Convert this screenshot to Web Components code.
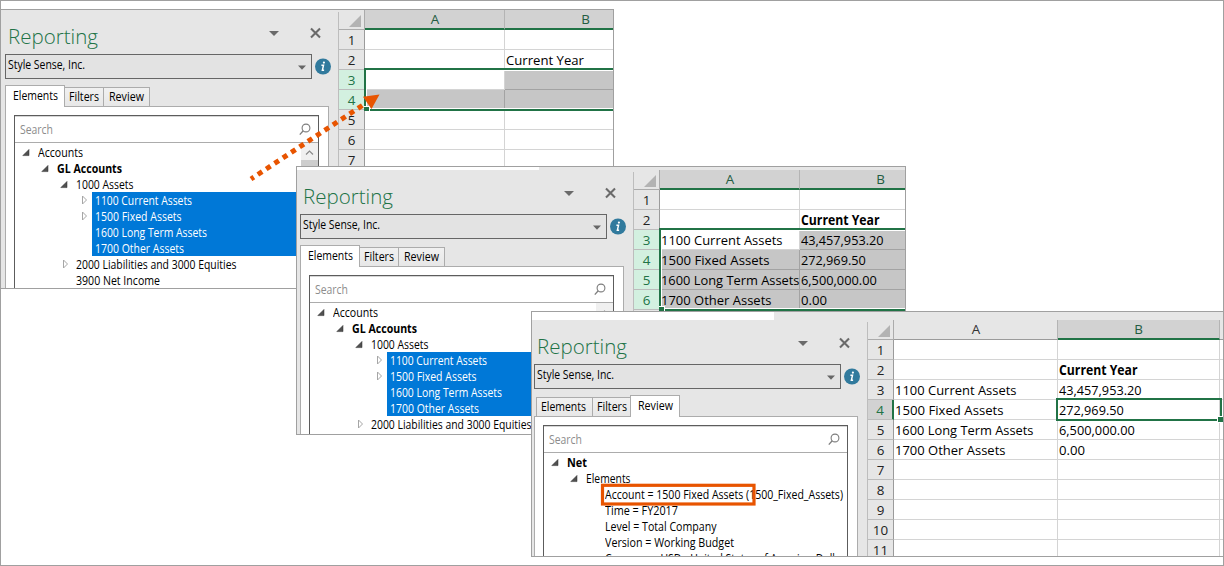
<!DOCTYPE html>
<html lang="en">
<head>
<meta charset="utf-8">
<title>Reporting</title>
<style>
    body {
        margin: 0;
        background: #fff;
    }
</style>
</head>
<body>
<report-canvas>
    <report-window style="left: 0; top: 9px; width: 614px; height: 280px; --shift: 0px; --strip: 0px;">
        <report-pane slot="pane" tab="Elements" tree="accounts" rows="9" scroll></report-pane>
        <sheet-grid slot="sheet" sheet="empty"></sheet-grid>
    </report-window>
    <report-window style="left: 296px; top: 166px; width: 610px; height: 269px; --shift: -1px; --strip: 3px;">
        <report-pane slot="pane" tab="Elements" tree="accounts" rows="8" scroll></report-pane>
        <sheet-grid slot="sheet" sheet="filled"></sheet-grid>
    </report-window>
    <report-window style="left: 531px; top: 311px; width: 693px; height: 246px; --shift: -2px; --strip: 8px;">
        <report-pane slot="pane" tab="Review" tree="review" rows="7"></report-pane>
        <sheet-grid slot="sheet" sheet="review"></sheet-grid>
    </report-window>
    <callout-marks></callout-marks>
</report-canvas>

<script>
// Condense each label to its data-fit width
function fitText(root) {
    root.querySelectorAll('[data-fit]').forEach(el => {
        const natural = el.getBoundingClientRect().width;
        el.style.transform = `scaleX(${(Number(el.dataset.fit) / natural).toFixed(4)})`;
    });
}

// [level, label, width, state]
const TREES = {
    accounts: [
        [0, 'Accounts', 45, 'open'],
        [1, 'GL Accounts', 65, 'open bold'],
        [2, '1000 Assets', 57.5, 'open'],
        [3, '1100 Current Assets', 97, 'closed selected'],
        [3, '1500 Fixed Assets', 86.5, 'closed selected'],
        [3, '1600 Long Term Assets', 112, 'selected'],
        [3, '1700 Other Assets', 89, 'selected'],
        [2, '2000 Liabilities and 3000 Equities', 160.5, 'closed'],
        [2, '3900 Net Income', 84, '']
    ],
    review: [
        [0, 'Net', 20, 'open bold'],
        [1, 'Elements', 44.5, 'open'],
        [2, 'Account = 1500 Fixed Assets (1500_Fixed_Assets)', 238, ''],
        [2, 'Time = FY2017', 73, ''],
        [2, 'Level = Total Company', 111.5, ''],
        [2, 'Version = Working Budget', 129, ''],
        [2, 'Currency = USD - United States of America, Dollar', 240, '']
    ]
};

const ACCOUNT_ROWS = {
    2: ['', ['Current Year', 78.5, 'bold']],
    3: [['1100 Current Assets', 121.5], ['43,457,953.20', 82.5]],
    4: [['1500 Fixed Assets', 108.5], ['272,969.50', 64.8]],
    5: [['1600 Long Term Assets', 138.5], ['6,500,000.00', 75.8]],
    6: [['1700 Other Assets', 110.5], ['0.00', 26]]
};

const SHEETS = {
    empty: {
        columns: [140, 162],
        rows: 7,
        cells: { 2: ['', ['Current Year', 78]] },
        activeCols: [0, 1],
        range: [3, 4]
    },
    filled: {
        columns: [140, 162],
        rows: 7,
        cells: ACCOUNT_ROWS,
        activeCols: [0, 1],
        range: [3, 6]
    },
    review: {
        columns: [164, 162, 60],
        rows: 11,
        cells: ACCOUNT_ROWS,
        activeCols: [1],
        cell: 4
    }
};

class ReportCanvas extends HTMLElement {
    constructor() {
        super();
        this.attachShadow({ mode: 'open' });
        this.shadowRoot.innerHTML = `
            <style>
                :host {
                    display: block;
                    position: relative;
                    box-sizing: border-box;
                    width: 1224px;
                    height: 566px;
                    overflow: hidden;
                    background: #fff;
                    font-family: "Open Sans", "Noto Sans", sans-serif;
                    color: #000;
                }
                .frame {
                    box-sizing: border-box;
                    height: 100%;
                    border: 1px solid #a0a0a0;
                }
            </style>
            <div class="frame"></div>
            <slot></slot>
        `;
    }
}

class ReportWindow extends HTMLElement {
    constructor() {
        super();
        this.attachShadow({ mode: 'open' });
        this.shadowRoot.innerHTML = `
            <style>
                :host {
                    position: absolute;
                    box-sizing: border-box;
                    display: flex;
                    flex-direction: column;
                    overflow: hidden;
                    border: 1px solid #a0a0a0;
                    background: #e6e6e6;
                }
                .strip {
                    flex: none;
                    width: 242px;
                    height: var(--strip);
                    background: #fff;
                }
                .body {
                    flex: 1;
                    min-height: 0;
                    display: flex;
                    margin-left: var(--shift);
                }
            </style>
            <div class="strip"></div>
            <div class="body">
                <slot name="pane"></slot>
                <slot name="sheet"></slot>
            </div>
        `;
    }
}

class ReportPane extends HTMLElement {
    constructor() {
        super();
        this.attachShadow({ mode: 'open' });
    }

    connectedCallback() {
        this.render();
        fitText(this.shadowRoot);
    }

    renderTabs() {
        const tabs = [['Elements', 45], ['Filters', 30], ['Review', 35]];
        return tabs.map(([name, width]) => {
            const on = name === this.getAttribute('tab') ? ' on' : '';
            return `<div class="tab${on}"><span data-fit="${width}">${name}</span></div>`;
        }).join('');
    }

    renderTree() {
        const rows = TREES[this.getAttribute('tree')].slice(0, Number(this.getAttribute('rows')));
        return rows.map(([level, label, width, state]) => {
            let mark = '';
            if (state.includes('open')) mark = '<path d="M8 5.4V11.6H1.8z" fill="#505050" stroke="#2a2a2a" stroke-width=".5"/>';
            if (state.includes('closed')) mark = '<path d="M4.5 4v8l4-4z" fill="#fff" stroke="#a6a6a6"/>';
            return `
                <div class="row ${state}" style="padding-left: ${6 + level * 19}px">
                    <svg width="14" height="16">${mark}</svg>
                    <div class="label"><span data-fit="${width}">${label}</span></div>
                </div>`;
        }).join('');
    }

    render() {
        const review = this.getAttribute('tab') === 'Review';
        this.shadowRoot.innerHTML = `
            <style>
                :host {
                    flex: none;
                    width: 337px;
                    display: flex;
                    flex-direction: column;
                    font-size: 12px;
                    line-height: 16px;
                }
                span {
                    display: block;
                    flex: none;
                    width: max-content;
                    white-space: nowrap;
                    transform-origin: 0 0;
                }
                svg {
                    display: block;
                    flex: none;
                }
                .title {
                    flex: none;
                    box-sizing: border-box;
                    height: 44px;
                    padding: 10px 17.5px 0 7px;
                    display: flex;
                    justify-content: space-between;
                    font-size: 20.5px;
                    line-height: 32px;
                    font-weight: 300;
                    color: #217346;
                }
                .tools {
                    display: flex;
                    gap: 31px;
                    padding-top: 7px;
                }
                .company {
                    flex: none;
                    display: flex;
                    align-items: center;
                    gap: 3px;
                    padding-left: 4px;
                }
                .select {
                    box-sizing: border-box;
                    width: 307px;
                    height: 25px;
                    padding: 2px 5px 0 2px;
                    border: 1px solid #666;
                    background: #e3e3e3;
                    display: flex;
                    justify-content: space-between;
                }
                .select svg {
                    margin-top: 8px;
                }
                .tabs {
                    flex: none;
                    display: flex;
                    align-items: flex-end;
                    height: 21px;
                    margin-top: 6px;
                    padding-left: ${review ? 6 : 4}px;
                }
                .tab {
                    box-sizing: border-box;
                    height: 19px;
                    border: 1px solid #acacac;
                    border-bottom: 0;
                    background: linear-gradient(#f1f1f1, #e7e7e7);
                    padding: 1px 4px 0;
                }
                .tab + .tab {
                    margin-left: -1px;
                }
                .tab:first-child {
                    width: 57px;
                }
                .tab:nth-child(2) {
                    width: 40px;
                }
                .tab:nth-child(3) {
                    width: 47px;
                    padding-left: 5px;
                }
                .tab.on {
                    position: relative;
                    z-index: 1;
                    height: 22px;
                    margin-bottom: -1px;
                    padding: 2px 7px 0;
                    background: #fff;
                }
                .tab.on:first-child {
                    width: 60px;
                }
                .tab.on:nth-child(3) {
                    width: 50px;
                    margin-left: -2px;
                    padding-left: 7px;
                }
                .panel {
                    flex: 1;
                    min-height: 0;
                    box-sizing: border-box;
                    width: 324px;
                    margin-left: 4px;
                    padding: 8px 9px 0 8px;
                    border: 1px solid #acacac;
                    border-bottom: 0;
                    background: #fff;
                    display: flex;
                    flex-direction: column;
                }
                .box {
                    flex: 1;
                    min-height: 0;
                    display: flex;
                    flex-direction: column;
                    border: 1px solid #5c5c5c;
                    border-bottom: 0;
                }
                .search {
                    flex: none;
                    box-sizing: border-box;
                    height: 27px;
                    padding: 5px 7px 0 5px;
                    border-top: 1px solid #d6d6d6;
                    border-bottom: 1px solid #acacac;
                    display: flex;
                    justify-content: space-between;
                    color: #8c8c8c;
                }
                .search svg {
                    margin-top: 1px;
                }
                .content {
                    flex: 1;
                    min-height: 0;
                    display: flex;
                    overflow: hidden;
                }
                .tree {
                    flex: 1;
                    min-width: 0;
                    padding-top: 1px;
                }
                .row {
                    display: flex;
                    height: 16px;
                }
                .label {
                    flex: 1;
                    min-width: 0;
                    padding: 1px 0 0 3px;
                    line-height: 16px;
                    box-sizing: border-box;
                    height: 16px;
                }
                .selected .label {
                    background: #0078d7;
                    color: #fff;
                }
                .bold {
                    font-weight: 700;
                }
                .scroll {
                    flex: none;
                    width: 17px;
                    background: #f0f0f0;
                    display: ${this.hasAttribute('scroll') ? 'flex' : 'none'};
                    flex-direction: column;
                }
                .thumb {
                    height: 60px;
                    background: #cdcdcd;
                }
            </style>
            <div class="title">
                <span data-fit="90">Reporting</span>
                <div class="tools">
                    <svg width="10" height="14"><path d="M0 4h10L5 9z" fill="#6a6a6a"/></svg>
                    <svg width="11" height="12" viewBox="0 0 11 12"><path d="M1 1.5l9 9M10 1.5l-9 9" stroke="#6a6a6a" stroke-width="2.1"/></svg>
                </div>
            </div>
            <div class="company">
                <div class="select">
                    <span data-fit="77">Style Sense, Inc.</span>
                    <svg width="8" height="5"><path d="M0 .5h8L4 4.7z" fill="#666"/></svg>
                </div>
                <svg width="16" height="17" viewBox="0 0 16 17">
                    <circle cx="8" cy="8.5" r="8" fill="#317a9d"/>
                    <circle cx="8.9" cy="4.6" r="1.1" fill="#fff"/>
                    <path d="M6.4 7.3h2.1L7.4 12.2h1.7" fill="none" stroke="#fff" stroke-width="1.5"/>
                </svg>
            </div>
            <div class="tabs">${this.renderTabs()}</div>
            <div class="panel">
                <div class="box">
                    <div class="search">
                        <span data-fit="33">Search</span>
                        <svg width="12" height="13" viewBox="0 0 12 13">
                            <circle cx="7" cy="5" r="3.9" fill="none" stroke="#7d7d7d" stroke-width="1.1"/>
                            <path d="M4.2 7.8L.8 11.6" stroke="#7d7d7d" stroke-width="1.3"/>
                        </svg>
                    </div>
                    <div class="content">
                        <div class="tree">${this.renderTree()}</div>
                        <div class="scroll">
                            <svg width="17" height="17"><path d="M5 11.5l3.5-3.5 3.5 3.5" fill="none" stroke="#8a8a8a" stroke-width="1.2"/></svg>
                            <div class="thumb"></div>
                        </div>
                    </div>
                </div>
            </div>
        `;
    }
}

class SheetGrid extends HTMLElement {
    constructor() {
        super();
        this.attachShadow({ mode: 'open' });
    }

    connectedCallback() {
        this.sheet = SHEETS[this.getAttribute('sheet')];
        this.render();
        fitText(this.shadowRoot);
    }

    inRange(row) {
        const range = this.sheet.range;
        return Boolean(range) && row >= range[0] && row <= range[1];
    }

    renderHeader() {
        const letters = this.sheet.columns.map((width, i) => {
            const on = this.sheet.activeCols.includes(i) ? ' on' : '';
            return `<div class="col${on}" style="grid-area: 1 / ${i + 2}">${'AB'[i] || ''}</div>`;
        }).join('');
        return `<div class="corner"><svg width="12" height="12"><path d="M12 0v12H0z" fill="#b3b3b3"/></svg></div>${letters}`;
    }

    renderRow(row) {
        const { columns, cells, range, cell } = this.sheet;
        let head = 'num';
        if (this.inRange(row)) head += ' picked';
        if (row === cell) head += ' current';
        let html = `<div class="${head}" style="grid-area: ${row + 1} / 1">${row}</div>`;
        columns.forEach((width, i) => {
            const value = (cells[row] || [])[i];
            // the first cell of a range stays white
            const shade = this.inRange(row) && !(row === range[0] && i === 0) ? ' shade' : '';
            const text = value ? `<span class="${value[2] || ''}" data-fit="${value[1]}">${value[0]}</span>` : '';
            html += `<div class="cell${shade}" style="grid-area: ${row + 1} / ${i + 2}">${text}</div>`;
        });
        return html;
    }

    renderSelection() {
        const { range, cell } = this.sheet;
        if (range) {
            return `<div class="range" style="grid-area: ${range[0] + 1} / 2 / ${range[1] + 2} / -1"><i></i></div>`;
        }
        return `<div class="single" style="grid-area: ${cell + 1} / 3"><i></i></div>`;
    }

    render() {
        const { columns, rows } = this.sheet;
        let body = '';
        for (let row = 1; row <= rows; row++) body += this.renderRow(row);
        this.shadowRoot.innerHTML = `
            <style>
                :host {
                    flex: 1;
                    min-width: 0;
                    display: flex;
                    overflow: hidden;
                    font-size: 13.4px;
                    line-height: 20px;
                }
                .edge {
                    flex: none;
                    width: 1px;
                    margin-top: 2px;
                    background: #bdbdbd;
                }
                .grid {
                    flex: none;
                    align-self: flex-start;
                    display: grid;
                    grid-template-columns: 26px ${columns.map(w => w + 'px').join(' ')};
                    grid-template-rows: repeat(${rows + 1}, 20px);
                }
                .grid > div {
                    box-sizing: border-box;
                    min-width: 0;
                }
                .corner {
                    grid-area: 1 / 1;
                    padding: 5px 0 0 10px;
                    border-right: 1px solid #ababab;
                    border-bottom: 1px solid #ababab;
                }
                svg {
                    display: block;
                }
                .col {
                    border-right: 1px solid #b4b4b4;
                    border-bottom: 1px solid #9b9b9b;
                    line-height: 19px;
                    text-align: center;
                    color: #333;
                }
                .col:nth-child(2) {
                    padding-left: 1px;
                }
                .col.on {
                    border-bottom: 2px solid #217346;
                    background: #d2d2d2;
                    color: #235c41;
                }
                .num {
                    border-right: 1px solid #9b9b9b;
                    border-bottom: 1px solid #bcbcbc;
                    text-align: center;
                    color: #222;
                }
                .num.picked {
                    background: #d3f0e0;
                    color: #217346;
                }
                .num.current {
                    border-right: 2px solid #217346;
                    background: #d2d2d2;
                    color: #217346;
                }
                .cell {
                    padding-left: 1px;
                    border-right: 1px solid #d4d4d4;
                    border-bottom: 1px solid #d4d4d4;
                    background: #fff;
                    white-space: nowrap;
                }
                .cell.shade {
                    background: #c6c6c6;
                    border-color: #a3a3a3;
                }
                span {
                    display: block;
                    width: max-content;
                    position: relative;
                    z-index: 1;
                    transform-origin: 0 0;
                }
                .bold {
                    font-weight: 700;
                }
                .range, .single {
                    position: relative;
                    border: 2px solid #217346;
                    box-shadow: inset 0 0 0 1px #fff;
                }
                .range {
                    margin: -2px -4px -1px -1px;
                }
                .single {
                    margin: -2px -2px -1px -2px;
                    box-shadow: none;
                }
                i {
                    position: absolute;
                    width: 5px;
                    height: 5px;
                    background: #217346;
                    border: 1px solid #fff;
                }
                .range i {
                    left: -2px;
                    bottom: -2px;
                    height: 4px;
                    width: 5px;
                    border-width: 1px 1px 0 0;
                }
                .single i {
                    right: -4px;
                    bottom: -4px;
                }
            </style>
            <div class="edge"></div>
            <div class="grid">
                ${this.renderHeader()}
                ${body}
                ${this.renderSelection()}
            </div>
        `;
    }
}

// Orange arrow and highlight box over the windows
class CalloutMarks extends HTMLElement {
    constructor() {
        super();
        this.attachShadow({ mode: 'open' });
        this.shadowRoot.innerHTML = `
            <style>
                :host {
                    position: absolute;
                    inset: 0;
                }
                svg {
                    display: block;
                }
            </style>
            <svg width="1224" height="566">
                <path d="M251 179L363 105" stroke="#e85400" stroke-width="5" stroke-dasharray="5.2 4.8" stroke-dashoffset="1.8"/>
                <path d="M379.5 94.5L363 96.8L371.5 109z" fill="#e85400"/>
                <rect x="602.5" y="485.3" width="151.5" height="18.7" fill="none" stroke="#e85400" stroke-width="3.2"/>
            </svg>
        `;
    }
}

customElements.define('report-canvas', ReportCanvas);
customElements.define('report-window', ReportWindow);
customElements.define('report-pane', ReportPane);
customElements.define('sheet-grid', SheetGrid);
customElements.define('callout-marks', CalloutMarks);
</script>
</body>
</html>
